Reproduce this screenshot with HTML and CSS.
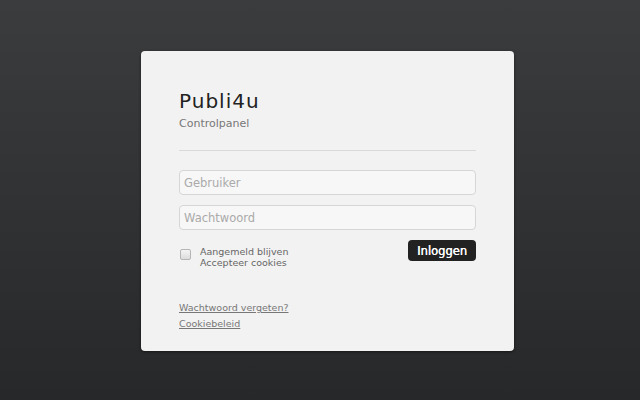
FILE: index.html
```html
<!DOCTYPE html>
<html lang="nl">

<head>
  <meta charset="UTF-8">
  <meta name="viewport" content="width=device-width, initial-scale=1.0">
  <title>Publi4u - Controlpanel</title>
  <link rel="stylesheet" href="styles.css">
</head>

<body>
  <div class="login">
    <h1>Publi4u</h1>
    <p class="subtitle">Controlpanel</p>
    <hr>

    <form>
      <input type="text" class="field" placeholder="Gebruiker">
      <input type="password" class="field" placeholder="Wachtwoord">

      <div class="options">
        <label class="remember">
          <input type="checkbox" class="check">
          <span>Aangemeld blijven<br>Accepteer cookies</span>
        </label>
        <button type="button" class="btn">Inloggen</button>
      </div>
    </form>

    <div class="links">
      <a href="#">Wachtwoord vergeten?</a>
      <a href="#">Cookiebeleid</a>
    </div>
  </div>
</body>

</html>
```

FILE: styles.css
```css
body {
  margin: 0;
  height: 400px;
  background: linear-gradient(#3a3c3e, #27282a);
  font-family: "DejaVu Sans", Verdana, sans-serif;
}

.login {
  box-sizing: border-box;
  width: 373px;
  height: 300px;
  margin: 51px 0 0 141px;
  padding: 37px 38px 0 38px;
  background: #f2f2f2;
  border-radius: 4px;
  box-shadow: 0 1px 3px rgba(0, 0, 0, 0.5);
}

h1 {
  margin: 0;
  font-size: 20px;
  font-weight: normal;
  letter-spacing: 1px;
  line-height: 26px;
  color: #222;
}

.subtitle {
  margin: 3px 0 0;
  font-size: 11px;
  line-height: 14px;
  color: #777;
}

hr {
  margin: 19px 0 0;
  border: 0;
  border-top: 1px solid #d9d9d9;
}

form {
  margin-top: 19px;
}

/* invoervelden */
.field {
  display: block;
  box-sizing: border-box;
  width: 100%;
  height: 25px;
  margin-bottom: 10px;
  padding: 0 4px;
  font-family: inherit;
  font-size: 11.5px;
  color: #333;
  background: #f7f7f7;
  border: 1px solid #d6d6d6;
  border-radius: 4px;
}

.field::placeholder {
  color: #aaa;
}

.options {
  display: flex;
  justify-content: space-between;
  align-items: flex-start;
}

.remember {
  display: flex;
  gap: 9px;
  margin-top: 6px;
  padding-left: 1px;
  font-size: 9.5px;
  line-height: 11px;
  color: #666;
}

.check {
  appearance: none;
  width: 11px;
  height: 11px;
  margin: 3px 0 0;
  background: linear-gradient(#f4f4f4, #dcdcdc);
  border: 1px solid #b5b5b5;
  border-radius: 2px;
}

.btn {
  width: 68px;
  height: 21px;
  padding: 0;
  font-family: inherit;
  font-size: 11.5px;
  color: #fff;
  text-shadow: 0.4px 0 0 #fff;
  background: #222;
  border: 0;
  border-radius: 4px;
  cursor: pointer;
}

.links {
  margin-top: 32px;
  font-size: 9.5px;
  line-height: 16px;
}

.links a {
  display: block;
  width: max-content;
  color: #777;
}
```
